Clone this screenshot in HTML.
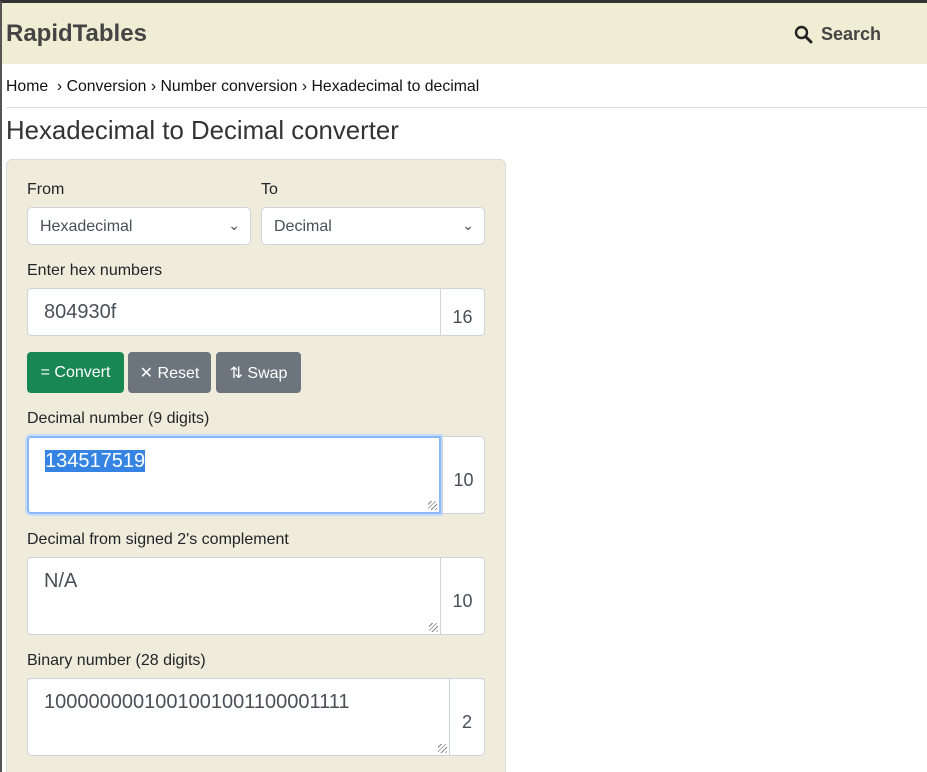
<!DOCTYPE html>
<html style="overflow:hidden;height:772px"><head><style>
body{margin:0;width:927px;height:772px;overflow:hidden;background:#fff;font-family:"Liberation Sans",sans-serif;color:#212529;position:relative}
.a{position:absolute}
.hdr{left:0;top:0;width:927px;height:64px;background:#efedd3;border-top:3px solid #333;box-sizing:border-box;border-left:2px solid #555}
.lb{position:absolute;font-size:16px;color:#212529}
.box{position:absolute;background:#fff;border:1px solid #ced4da;box-sizing:border-box;border-radius:4px;font-size:20px;color:#495057}
.add{position:absolute;background:#fff;border:1px solid #ced4da;box-sizing:border-box;border-radius:0 4px 4px 0;font-size:18px;color:#495057;display:flex;align-items:center;justify-content:center}
.btn{position:absolute;top:352px;height:41px;border-radius:4px;color:#fff;font-size:16px;display:flex;align-items:center;justify-content:center}
.sel{position:absolute;top:207px;height:38px;background:#fff;border:1px solid #ced4da;box-sizing:border-box;border-radius:5px;font-size:16px;color:#495057;padding:10px 12px}
.sel span{position:absolute;right:10px;top:9px;font-size:14px}
.grip{position:absolute;right:2px;bottom:2px;width:9px;height:9px;background:repeating-linear-gradient(135deg,transparent 0 2px,#888 2px 3px)}
</style></head><body>
<div class="a" style="left:0;top:0;width:2px;height:772px;background:#555"></div>
<div class="a hdr"></div>
<div class="a" style="left:6px;top:20px;font-size:24px;font-weight:bold;color:#444">RapidTables</div>
<svg class="a" style="left:794px;top:25px" width="20" height="20" viewBox="0 0 20 20"><circle cx="7.5" cy="7.5" r="5.5" fill="none" stroke="#222" stroke-width="2.4"/><path d="M11.5 11.5 L17 17" stroke="#222" stroke-width="3" stroke-linecap="round"/></svg>
<div class="a" style="left:821px;top:24px;font-size:18px;font-weight:bold;color:#444">Search</div>
<div class="a" style="left:6px;top:78px;font-size:15.8px;color:#111">Home &nbsp;› Conversion › Number conversion › Hexadecimal to decimal</div>
<div class="a" style="left:6px;top:107px;width:921px;height:1px;background:#ddd"></div>
<div class="a" style="left:6px;top:117px;font-size:25.8px;color:#333">Hexadecimal to Decimal converter</div>
<div class="a" style="left:6px;top:159px;width:498px;height:640px;background:#efecdb;border:1px solid #ddd;border-radius:6px"></div>
<div class="lb" style="left:27px;top:181px">From</div>
<div class="lb" style="left:261px;top:181px">To</div>
<div class="sel" style="left:27px;width:224px">Hexadecimal<span>⌄</span></div>
<div class="sel" style="left:261px;width:224px">Decimal<span>⌄</span></div>
<div class="lb" style="left:27px;top:262px">Enter hex numbers</div>
<div class="box" style="left:27px;top:288px;width:414px;height:48px;padding:12px 16px;border-radius:4px 0 0 4px">804930f</div>
<div class="add" style="left:440px;top:288px;width:45px;height:48px;padding-top:10px">16</div>
<div class="btn" style="left:27px;width:97px;background:#198754">= Convert</div>
<div class="btn" style="left:128px;width:83px;background:#6c757d">✕ Reset</div>
<div class="btn" style="left:216px;width:85px;background:#6c757d">⇅ Swap</div>
<div class="lb" style="left:27px;top:410px">Decimal number (9 digits)</div>
<div class="box" style="left:27px;top:436px;width:414px;height:78px;padding:12px 16px;border:2px solid #8bb9f8;box-shadow:0 0 0 2px #c7dcfb;border-radius:4px 0 0 4px"><span style="background:#3584e4;color:#fff">134517519</span><div class="grip"></div></div>
<div class="add" style="left:442px;top:436px;width:43px;height:78px;padding-top:10px">10</div>
<div class="lb" style="left:27px;top:531px">Decimal from signed 2's complement</div>
<div class="box" style="left:27px;top:557px;width:414px;height:78px;padding:12px 16px;border-radius:4px 0 0 4px">N/A<div class="grip"></div></div>
<div class="add" style="left:440px;top:557px;width:45px;height:78px;padding-top:10px">10</div>
<div class="lb" style="left:27px;top:652px">Binary number (28 digits)</div>
<div class="box" style="left:27px;top:678px;width:423px;height:78px;padding:12px 16px;border-radius:4px 0 0 4px">1000000001001001001100001111<div class="grip"></div></div>
<div class="add" style="left:449px;top:678px;width:36px;height:78px;padding-top:10px">2</div>
</body></html>
